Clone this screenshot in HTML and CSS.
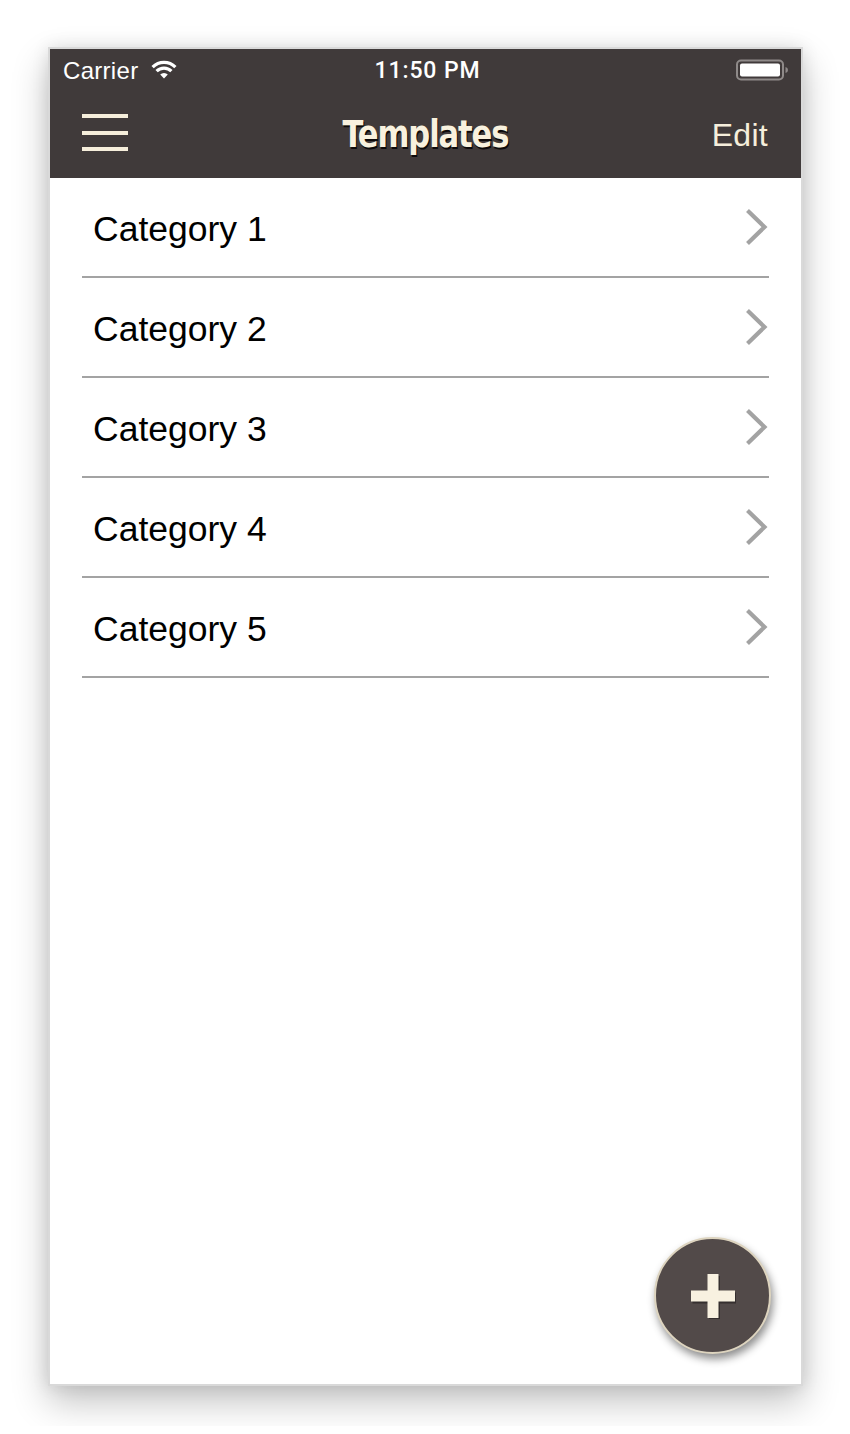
FILE: index.html
```html
<!DOCTYPE html>
<html>
<head>
<meta charset="utf-8">
<link rel="stylesheet" href="styles.css">
</head>
<body>
<div class="phone">
  <header class="header">
    <div class="status">
      <div class="status-left">
        <span class="carrier">Carrier</span>
        <svg class="wifi" width="28" height="22" viewBox="0 0 28 22">
          <path d="M14 20.5 L10.2 16.6 A5.4 5.4 0 0 1 17.8 16.6 Z" fill="#fff"/>
          <path d="M6.6 13.1 A10.5 10.5 0 0 1 21.4 13.1" fill="none" stroke="#fff" stroke-width="3.2"/>
          <path d="M2.6 9.1 A16.2 16.2 0 0 1 25.4 9.1" fill="none" stroke="#fff" stroke-width="3.2"/>
        </svg>
      </div>
      <div class="time">11:50 PM</div>
      <div class="status-right">
        <svg class="battery" width="54" height="22" viewBox="0 0 54 22">
          <rect x="1" y="1.5" width="46" height="19" rx="4" fill="none" stroke="#8f8a89" stroke-width="2"/>
          <rect x="4" y="4.5" width="40" height="13" rx="2" fill="#fff"/>
          <path d="M49.5 8 Q52 8.5 52 11 Q52 13.5 49.5 14 Z" fill="#8f8a89"/>
        </svg>
      </div>
    </div>
    <nav class="nav">
      <div class="menu">
        <span></span><span></span><span></span>
      </div>
      <div class="title">Templates</div>
      <div class="edit">Edit</div>
    </nav>
  </header>
  <ul class="list">
    <li class="row"><span>Category 1</span><svg class="chev" width="24" height="38" viewBox="0 0 24 38"><path d="M2.5 2.5 L19.5 19 L2.5 35.5" fill="none" stroke="#a3a3a3" stroke-width="4.2"/></svg></li>
    <li class="row"><span>Category 2</span><svg class="chev" width="24" height="38" viewBox="0 0 24 38"><path d="M2.5 2.5 L19.5 19 L2.5 35.5" fill="none" stroke="#a3a3a3" stroke-width="4.2"/></svg></li>
    <li class="row"><span>Category 3</span><svg class="chev" width="24" height="38" viewBox="0 0 24 38"><path d="M2.5 2.5 L19.5 19 L2.5 35.5" fill="none" stroke="#a3a3a3" stroke-width="4.2"/></svg></li>
    <li class="row"><span>Category 4</span><svg class="chev" width="24" height="38" viewBox="0 0 24 38"><path d="M2.5 2.5 L19.5 19 L2.5 35.5" fill="none" stroke="#a3a3a3" stroke-width="4.2"/></svg></li>
    <li class="row"><span>Category 5</span><svg class="chev" width="24" height="38" viewBox="0 0 24 38"><path d="M2.5 2.5 L19.5 19 L2.5 35.5" fill="none" stroke="#a3a3a3" stroke-width="4.2"/></svg></li>
  </ul>
  <button class="fab">
    <svg width="46" height="46" viewBox="0 0 46 46">
      <g fill="#000" opacity="0.35" transform="translate(1.5,2)">
        <rect x="17.5" y="1" width="11" height="44"/>
        <rect x="1" y="17.5" width="44" height="11"/>
      </g>
      <g fill="#f8f1e0">
        <rect x="17.5" y="1" width="11" height="44"/>
        <rect x="1" y="17.5" width="44" height="11"/>
      </g>
    </svg>
  </button>
</div>
</body>
</html>
```

FILE: styles.css
```css
* { box-sizing: border-box; }
html, body { margin: 0; padding: 0; background: #fff; }
body { font-family: "Liberation Sans", Arial, sans-serif; padding: 47px 0 40px 48px; }

.phone {
  position: relative;
  width: 755px;
  height: 1339px;
  border: 2px solid #d9d9d9;
  background: #fff;
  box-shadow: 0 16px 34px rgba(0,0,0,0.24), 0 0 16px rgba(0,0,0,0.1);
}

.header {
  background: #403a3a;
  height: 129px;
  display: flex;
  flex-direction: column;
}

.status {
  height: 42px;
  display: flex;
  align-items: center;
  justify-content: space-between;
  padding: 0 11px 0 13px;
  color: #fff;
  position: relative;
}
.status-left { display: flex; align-items: center; gap: 10px; }
.carrier { font-size: 24px; letter-spacing: 0.3px; margin-top: 1px; }
.wifi { margin-top: -2px; margin-left: 2px; }
.time {
  position: absolute;
  left: 0; right: 0;
  text-align: center;
  font-family: Roboto, "Liberation Sans", sans-serif;
  font-size: 23px;
  font-weight: 500;
  letter-spacing: 0.9px;
  margin-left: 4px;
  pointer-events: none;
}
.status-right { display: flex; align-items: center; }

.nav {
  flex: 1;
  display: flex;
  align-items: center;
  justify-content: space-between;
  padding: 0 33px 0 32px;
  position: relative;
}
.menu {
  width: 46px;
  display: flex;
  flex-direction: column;
  gap: 12.5px;
  margin-top: -4px;
}
.menu span {
  display: block;
  height: 4px;
  background: #f6eedb;
}
.title {
  position: absolute;
  left: 0; right: 0;
  top: 22px;
  text-align: center;
  font-family: "DejaVu Sans Condensed", "DejaVu Sans", sans-serif;
  font-stretch: condensed;
  font-size: 37px;
  font-weight: bold;
  color: #f8f1de;
  letter-spacing: -1.2px;
  transform: scaleX(0.92);
  text-shadow: 1px 2px 0 #0d0a0a;
}
.edit {
  font-size: 32px;
  color: #f6eedb;
  letter-spacing: 0.3px;
  position: relative;
  z-index: 1;
  margin-top: 2px;
}

.list {
  list-style: none;
  margin: 0;
  padding: 0 32px;
}
.row {
  height: 100px;
  border-bottom: 2px solid #a3a3a3;
  display: flex;
  align-items: center;
  justify-content: space-between;
  padding: 4px 0 0 11px;
  font-size: 35.5px;
  color: #000;
}
.chev { margin-right: 0; margin-top: -4px; }

.fab {
  position: absolute;
  left: 604px;
  top: 1188px;
  width: 117px;
  height: 117px;
  border-radius: 50%;
  background: #524a49;
  border: 2px solid #ddd4bf;
  box-shadow: 2px 5px 8px rgba(0,0,0,0.45);
  display: flex;
  align-items: center;
  justify-content: center;
  padding: 0;
  cursor: pointer;
}
```
